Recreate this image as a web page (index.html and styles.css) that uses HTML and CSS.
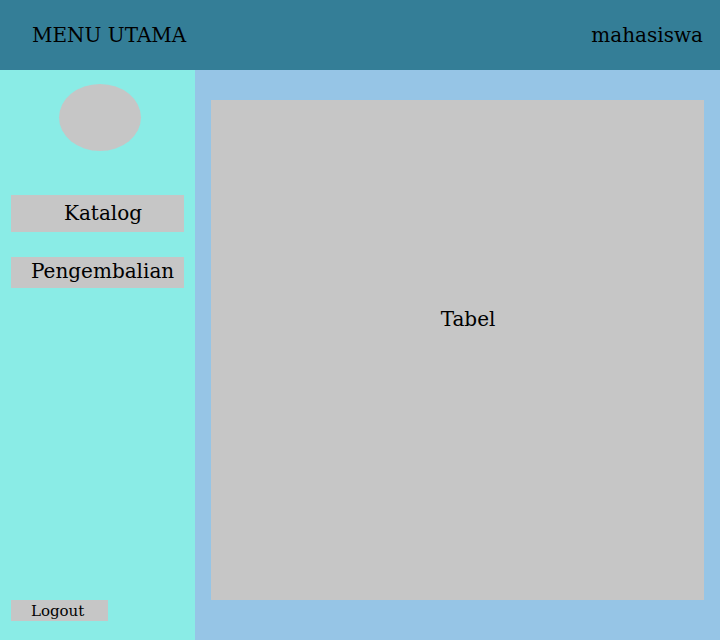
FILE: index.html
```html
<!DOCTYPE html>
<html>
<head>
<meta charset="utf-8">
<link rel="stylesheet" href="styles.css">
</head>
<body>
<header class="topbar">
  <div class="title">MENU UTAMA</div>
  <div class="user">mahasiswa</div>
</header>
<div class="layout">
  <aside class="sidebar">
    <div class="avatar"></div>
    <div class="btn btn-katalog">Katalog</div>
    <div class="btn btn-kembali">Pengembalian</div>
    <div class="spacer"></div>
    <div class="btn btn-logout">Logout</div>
  </aside>
  <main class="content">
    <div class="table">Tabel</div>
  </main>
</div>
</body>
</html>
```
FILE: styles.css
```css
* { box-sizing: border-box; }
html, body { margin: 0; padding: 0; }
body {
  width: 720px;
  height: 640px;
  font-family: "DejaVu Serif", serif;
  color: #000;
  display: flex;
  flex-direction: column;
  overflow: hidden;
}
.topbar {
  height: 70px;
  background: #347e97;
  display: flex;
  align-items: center;
  justify-content: space-between;
  padding: 0 17px 0 32px;
  font-size: 20px;
}
.layout {
  flex: 1;
  display: flex;
}
.sidebar {
  width: 195px;
  background: #8aece6;
  display: flex;
  flex-direction: column;
  padding: 14px 11px 19px 11px;
}
.avatar {
  width: 82px;
  height: 67px;
  border-radius: 50%;
  background: #c6c6c6;
  align-self: center;
  margin-left: 5px;
}
.btn {
  background: #c6c6c6;
  display: flex;
  align-items: center;
  font-size: 20px;
}
.btn-katalog {
  width: 173px;
  height: 37px;
  margin-top: 44px;
  padding-left: 53px;
  padding-bottom: 1px;
}
.btn-kembali {
  width: 173px;
  height: 31px;
  margin-top: 25px;
  padding-left: 20px;
  padding-bottom: 4px;
}
.spacer { flex: 1; }
.btn-logout {
  width: 97px;
  height: 21px;
  font-size: 15px;
  padding-left: 20px;
}
.content {
  flex: 1;
  background: #96c5e6;
  padding: 30px 16px 40px 16px;
  display: flex;
}
.table {
  flex: 1;
  background: #c6c6c6;
  display: flex;
  align-items: center;
  justify-content: center;
  font-size: 20px;
  padding-left: 21px;
  padding-bottom: 62px;
}
```
